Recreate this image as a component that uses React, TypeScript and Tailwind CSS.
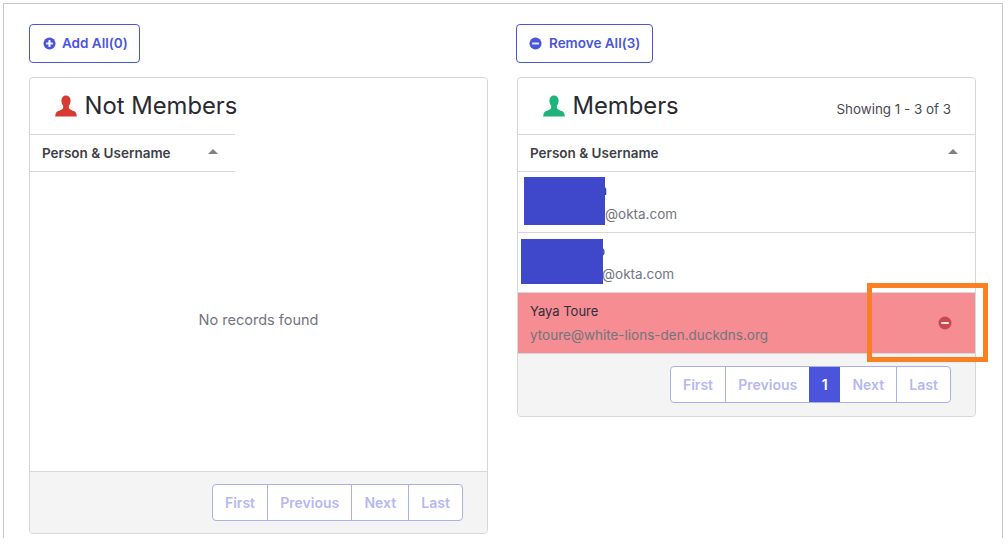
import React from 'react';

const font = { fontFamily: 'Inter, "Liberation Sans", sans-serif' };

const CircleIcon = ({ plus, className }: { plus?: boolean; className?: string }) => (
  <svg viewBox="0 0 14 14" className={className}>
    <circle cx="7" cy="7" r="6.5" fill="currentColor" />
    <rect x="3.2" y="5.9" width="7.6" height="2.2" rx="0.6" fill="#fff" fillOpacity="0.85" />
    {plus && <rect x="5.9" y="3.2" width="2.2" height="7.6" rx="0.6" fill="#fff" />}
  </svg>
);

const PersonIcon = ({ color }: { color: string }) => (
  <svg viewBox="0 0 22 22" className="w-[22px] h-[22px] shrink-0" fill={color}>
    <path d="M11 0.5c-2.8 0-4.6 2-4.6 5 0 2.3.8 4 1.6 5.2.3.6.3 2-.1 2.7-.8 1.1-3.3 1.8-5.3 2.9C1 17.3.4 18.6.2 21.5h21.6c-.2-2.9-.8-4.2-2.4-5.2-2-1.1-4.5-1.8-5.3-2.9-.4-.7-.4-2.1-.1-2.7.8-1.2 1.6-2.9 1.6-5.2 0-3-1.8-5-4.6-5z" />
  </svg>
);

const SortHead = ({ className }: { className: string }) => (
  <div className={`h-[37px] flex items-center justify-between pl-3 pr-[17px] border-b border-[#d7d7d9] text-[13.5px] font-semibold text-[#3f3f46] ${className}`}>
    <span>Person &amp; Username</span>
    <span className="w-0 h-0 mb-[3px] border-x-[5px] border-x-transparent border-b-[5px] border-b-[#808085]" />
  </div>
);

const Pager = ({ labels }: { labels: string[] }) => (
  <div className="flex h-[37px] border border-[#aab0ee] rounded-[4px] bg-white overflow-hidden text-[14px] font-semibold text-[#b5b9f0]">
    {labels.map((label, i) =>
      label === '1' ? (
        <span key={label} className="w-[31px] -my-px flex items-center justify-center bg-[#4a55dc] text-white">
          1
        </span>
      ) : (
        <span key={label} className={`flex items-center px-[12.1px] ${i > 0 && labels[i - 1] !== '1' ? 'border-l border-[#aab0ee]' : ''}`}>
          {label}
        </span>
      )
    )}
  </div>
);

// the name and the start of the address are blacked out in the picture
const UserRow = ({ name, rowClass, nameClass, emailClass, maskClass }: { name: string; rowClass: string; nameClass: string; emailClass: string; maskClass: string }) => (
  <div className={`relative border-b border-[#d7d7d9] pl-3 pt-[8px] ${rowClass}`}>
    <div className={`text-[13px] text-[#2f2f36] leading-[20px] text-right ${nameClass}`}>{name}</div>
    <div className={`text-[13.5px] text-[#74747e] leading-[20px] ${emailClass}`}>@okta.com</div>
    <div className={`absolute bg-[#3f47cb] ${maskClass}`} />
  </div>
);

export default function App() {
  return (
    <div className="w-[1008px] h-[544px] bg-white overflow-hidden" style={font}>
      <div className="ml-[3px] mt-[3px] w-[1000px] h-[535px] bg-white border-l border-r border-t border-[#c9c9cc] relative">
        <div className="pl-[25px] pt-5 flex gap-[29px]">
          <section className="w-[459px]">
            <button className="h-[39px] w-[111px] flex items-center gap-[6px] pl-[13px] border border-[#4a55dc] rounded-[4px] text-[13.5px] font-semibold text-[#4a55dc]">
              <CircleIcon plus className="w-[13px] h-[13px]" />
              Add All(0)
            </button>
            <div className="mt-[14px] h-[457px] flex flex-col border border-[#d7d7d9] rounded-[4px]">
              <div className="h-[57px] shrink-0 flex items-center gap-[7.5px] pl-[25px] w-[205px] border-b border-[#d7d7d9] text-[23.8px] text-[#2a2a30] whitespace-nowrap">
                <PersonIcon color="#d73a32" />
                <span>Not Members</span>
              </div>
              <SortHead className="w-[205px]" />
              <div className="flex-1 flex items-center justify-center text-[14.5px] text-[#74747e] pb-[4px]">No records found</div>
              <div className="h-[62px] flex items-center justify-end pr-6 bg-[#f4f4f4] border-t border-[#d7d7d9] rounded-b-[4px]">
                <Pager labels={['First', 'Previous', 'Next', 'Last']} />
              </div>
            </div>
          </section>
          <section className="w-[459px]">
            <button className="-ml-px h-[39px] w-[137px] flex items-center gap-[7px] pl-[12px] border border-[#4a55dc] rounded-[4px] text-[13.5px] font-semibold text-[#4a55dc]">
              <CircleIcon className="w-[13px] h-[13px]" />
              Remove All(3)
            </button>
            <div className="mt-[14px] h-[340px] flex flex-col border border-[#d7d7d9] rounded-[4px]">
              <div className="h-[57px] shrink-0 flex items-center justify-between pl-[25px] pr-6 border-b border-[#d7d7d9]">
                <div className="flex items-center gap-[7.5px] text-[23.8px] text-[#2a2a30]">
                  <PersonIcon color="#1fb47c" />
                  <span>Members</span>
                </div>
                <span className="text-[13.4px] text-[#4a4a52] mt-[7px]">Showing 1 - 3 of 3</span>
              </div>
              <SortHead className="" />
              <UserRow name="a" rowClass="h-[61px]" nameClass="w-[77px]" emailClass="pl-[75px] mt-[4px]" maskClass="left-[6px] top-[5px] w-[81px] h-[48px]" />
              <UserRow name="o" rowClass="h-[60px]" nameClass="w-[75px]" emailClass="pl-[72px] mt-[3px]" maskClass="left-[3px] top-[6px] w-[82px] h-[45px]" />
              <div className="h-[61px] flex items-center justify-between pl-3 pr-[23px] bg-[#f58d92] border-b border-[#d7d7d9]">
                <div>
                  <div className="text-[13px] text-[#2f2f36] leading-[20px]">Yaya Toure</div>
                  <div className="mt-1 text-[13.5px] text-[#74747e] leading-[20px]">ytoure@white-lions-den.duckdns.org</div>
                </div>
                <CircleIcon className="w-[14px] h-[14px] text-[#c8494f]" />
              </div>
              <div className="flex-1 flex items-center justify-end pr-6 pb-[2px] bg-[#f4f4f4] rounded-b-[4px]">
                <Pager labels={['First', 'Previous', '1', 'Next', 'Last']} />
              </div>
            </div>
          </section>
        </div>
        <div className="absolute left-[863px] top-[279px] w-[121px] h-[79px] border-[5px] border-[#fd7f23]" />
      </div>
    </div>
  );
}
